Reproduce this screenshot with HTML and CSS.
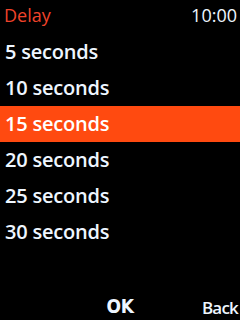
FILE: index.html
```html
<!DOCTYPE html>
<html>
<head>
<meta charset="utf-8">
<link rel="stylesheet" href="styles.css">
</head>
<body>
<div class="screen">
  <header class="top">
    <span class="title">Delay</span>
    <span class="clock">10:00</span>
  </header>
  <ul class="list">
    <li class="item">5 seconds</li>
    <li class="item">10 seconds</li>
    <li class="item selected">15 seconds</li>
    <li class="item">20 seconds</li>
    <li class="item">25 seconds</li>
    <li class="item">30 seconds</li>
  </ul>
  <footer class="keys">
    <span class="key-left"></span>
    <span class="key-mid">OK</span>
    <span class="key-right">Back</span>
  </footer>
</div>
</body>
</html>
```
FILE: styles.css
```css
html, body {
  margin: 0;
  padding: 0;
  background: #000;
}
.screen {
  width: 240px;
  height: 320px;
  background: #000;
  display: flex;
  flex-direction: column;
  font-family: "Open Sans", "DejaVu Sans", sans-serif;
  color: #eef6ff;
}
.top {
  height: 34px;
  display: flex;
  justify-content: space-between;
  align-items: flex-start;
  padding: 2px 3px 0 4px;
  box-sizing: border-box;
  font-size: 18px;
  line-height: 26px;
  font-weight: 500;
}
.title {
  color: #f0432a;
}
.clock {
  color: #eef6ff;
}
.list {
  list-style: none;
  margin: 0;
  padding: 0;
  flex: 1;
}
.item {
  height: 36px;
  line-height: 36px;
  padding-left: 5px;
  font-size: 20px;
  font-weight: 600;
  letter-spacing: -0.2px;
}
.selected {
  background: #ff4a10;
  color: #fff;
}
.keys {
  height: 40px;
  box-sizing: border-box;
  display: grid;
  grid-template-columns: 1fr auto 1fr;
  align-items: end;
  line-height: 1;
  padding: 0 2px 4px 4px;
  font-weight: 600;
}
.key-mid {
  font-family: "DejaVu Sans Condensed", "DejaVu Sans", sans-serif;
  font-stretch: condensed;
  font-weight: 700;
  font-size: 19px;
  letter-spacing: -0.5px;
  padding-right: 2px;
}
.key-right {
  text-align: right;
  font-size: 17px;
  letter-spacing: -0.8px;
}
```
